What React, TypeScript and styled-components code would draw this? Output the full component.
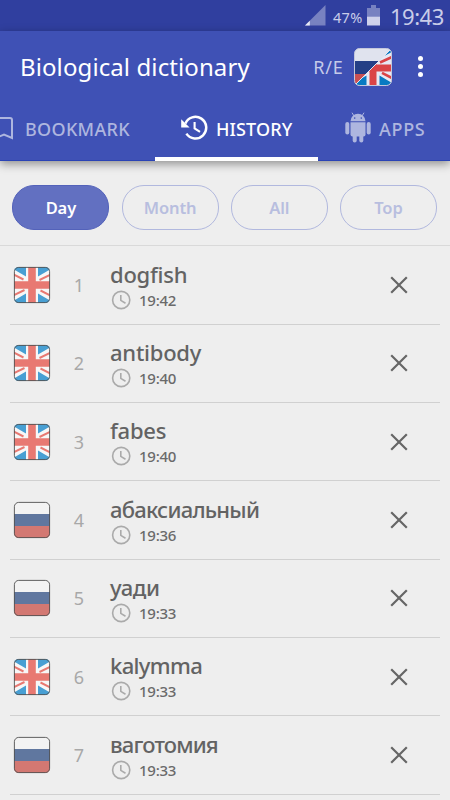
import React from "react";
import styled, { createGlobalStyle } from "styled-components";

const GlobalStyle = createGlobalStyle`
  * { box-sizing: border-box; }
  body { margin: 0; background: #eeeeee; font-family: "Noto Sans", sans-serif; overflow: hidden; }
  button { border: 0; padding: 0; margin: 0; background: none; font: inherit; color: inherit; }
  svg { display: block; flex: none; }
`;

const Screen = styled.main`
  width: 450px;
  height: 800px;
  overflow: hidden;
  display: flex;
  flex-direction: column;
  background: #eeeeee;
`;

const StatusBar = styled.div`
  height: 31px;
  flex: none;
  display: flex;
  align-items: center;
  justify-content: flex-end;
  padding-right: 6px;
  background: #303f9f;
  color: #c9cde9;
`;

const Battery = styled.span`
  font-size: 14.5px;
  line-height: 20px;
  width: 30px;
  margin: 2px 4px 0 7px;
  letter-spacing: 0.3px;
  white-space: nowrap;
`;

const Clock = styled.span`
  font-size: 22px;
  line-height: 30px;
  width: 54px;
  margin: 0 0 0 10px;
  letter-spacing: -0.5px;
  white-space: nowrap;
`;

const Header = styled.header`
  flex: none;
  height: 130px;
  background: #3f51b5;
  border-bottom: 1px solid #2a43b5;
  box-shadow: 0 3px 9px rgba(0, 0, 0, 0.4);
`;

const Toolbar = styled.div`
  height: 72px;
  display: flex;
  align-items: center;
  padding: 0 26.5px 1px 20px;
  color: #ffffff;
`;

const Title = styled.h1`
  margin: 1px 0 0;
  flex: 1;
  font-size: 24px;
  font-weight: 400;
  line-height: 32px;
  letter-spacing: 0.1px;
  white-space: nowrap;
`;

const Direction = styled.span`
  font-size: 18px;
  line-height: 24px;
  color: #c5cae9;
  margin-right: 10.5px;
  letter-spacing: 0.8px;
`;

const MenuButton = styled.button`
  margin-left: 25.5px;
  width: 6px;
  height: 21px;
  display: flex;
  flex-direction: column;
  justify-content: space-between;
`;

const Dot = styled.i`
  width: 5.4px;
  height: 5.4px;
  border-radius: 50%;
  background: #ffffff;
`;

const Tabs = styled.nav`
  height: 58px;
  display: grid;
  grid-template-columns: 155px 163px 132px;
`;

const Tab = styled.button<{ $active?: boolean; $start: number; $gap: number; $spacing: number }>`
  display: flex;
  align-items: center;
  gap: ${(p) => p.$gap}px;
  padding-left: ${(p) => p.$start}px;
  padding-bottom: ${(p) => (p.$active ? 2 : 6)}px;
  font-size: 18px;
  font-weight: 500;
  letter-spacing: ${(p) => p.$spacing}px;
  white-space: nowrap;
  color: ${(p) => (p.$active ? "#ffffff" : "#aeb6df")};
  border-bottom: ${(p) => (p.$active ? "4px solid #ffffff" : "0")};

  svg { margin-top: -3px; }
`;

const BookmarkSlot = styled.span`
  width: 13px;
  display: flex;
  justify-content: flex-end;
`;

const Filters = styled.div`
  flex: none;
  height: 85px;
  display: grid;
  grid-template-columns: repeat(4, 97px);
  column-gap: 12.2px;
  padding: 24px 12.4px 0;
  border-bottom: 1px solid #d9d9d9;
`;

const Pill = styled.button<{ $active?: boolean }>`
  height: 45px;
  border-radius: 22px;
  font-size: 16.5px;
  font-weight: 600;
  line-height: 24px;
  letter-spacing: -0.1px;
  border: 1px solid ${(p) => (p.$active ? "#5362ba" : "#b1b8de")};
  background: ${(p) => (p.$active ? "#6270c1" : "transparent")};
  color: ${(p) => (p.$active ? "#ffffff" : "#b8bedf")};
`;

const List = styled.ul`
  list-style: none;
  margin: 0;
  padding: 0.5px 10px 0;
`;

const Row = styled.li`
  height: 78.33px;
  display: grid;
  grid-template-columns: 50px 38px 12px 1fr 50.5px;
  align-items: center;
  border-bottom: 1px solid #d0d0d0;
`;

const FlagCell = styled.div`
  padding-left: 3px;
`;

const Index = styled.span`
  text-align: center;
  font-size: 18px;
  line-height: 24px;
  color: #a8a8a8;
`;

const Entry = styled.div`
  grid-column: 4;
  color: #636363;
`;

const Word = styled.div<{ $spacing: number }>`
  font-size: 22px;
  font-weight: 500;
  line-height: 28px;
  letter-spacing: ${(p) => p.$spacing}px;
  white-space: nowrap;
`;

const Time = styled.div`
  display: flex;
  align-items: center;
  gap: 8px;
  height: 23px;
  padding: 1px 0 0 1px;
  font-size: 15px;
  font-weight: 500;
  letter-spacing: -0.25px;
  color: #6a6a6a;
`;

const SignalIcon = () => (
  <svg width="21" height="21" viewBox="0 0 21 21">
    <path d="M20.5 0V20.5H0Z" fill="#7882c1" />
    <path d="M4.8 15.7V20.5H0Z" fill="#e8eaf6" />
  </svg>
);

const BatteryIcon = () => (
  <svg width="13" height="21" viewBox="0 0 13 21">
    <path d="M4 0h5v3h4v8.5H0V3h4z" fill="#7882c1" />
    <path d="M0 11.5h13v9H0z" fill="#cfd2eb" />
  </svg>
);

const UnionFlag = () => (
  <svg width="38" height="38" viewBox="0 0 38 38">
    <clipPath id="flag-round"><rect x="1" y="1" width="36" height="36" rx="4.5" /></clipPath>
    <g clipPath="url(#flag-round)">
      <path d="M1 1h36v36H1z" fill="#f7f7f7" />
      <path d="M1 1H13V10.5L1 3.5zM37 1H25V10.5L37 3.5zM1 37H13V27.5L1 34.5zM37 37H25V27.5L37 34.5z" fill="#489fd3" />
      <path d="M1 8.6L10.5 13.5M37 9L26.5 14M1 29L11.5 24M37 29.4L27.5 24.5" stroke="#e87972" strokeWidth="2" />
      <path d="M19 1V37M1 19H37" stroke="#e87972" strokeWidth="7.6" />
    </g>
    <rect x="1.4" y="1.4" width="35.2" height="35.2" rx="4.3" fill="none" stroke="#505050" strokeWidth=".9" />
  </svg>
);

const RussianFlag = () => (
  <svg width="38" height="38" viewBox="0 0 38 38">
    <rect x="1" y="1" width="36" height="36" rx="4.5" fill="#f3f3f3" />
    <path d="M1 13h36v12H1z" fill="#60779f" />
    <path d="M1 25h36v7.5a4.5 4.5 0 0 1-4.5 4.5h-27A4.5 4.5 0 0 1 1 32.5z" fill="#d37872" />
    <rect x="1.4" y="1.4" width="35.2" height="35.2" rx="4.3" fill="none" stroke="#505050" strokeWidth=".9" />
  </svg>
);

const SplitFlag = () => (
  <svg width="38" height="38" viewBox="0 0 38 38">
    <clipPath id="split-round"><rect x=".5" y=".5" width="37" height="37" rx="5" /></clipPath>
    <clipPath id="split-half"><path d="M38 0V38H0Z" /></clipPath>
    <g clipPath="url(#split-round)">
      <path d="M0 0h38v13H0z" fill="#e0e3ee" />
      <path d="M0 13h38v13H0z" fill="#243f86" />
      <path d="M0 26h38v12H0z" fill="#c95053" />
      <g clipPath="url(#split-half)">
        <path d="M0 0h38v38H0z" fill="#e6e9f4" />
        <path d="M38 1L25 4V10.5L38 4zM0 38H12.5V27.5L0 35zM38 38H25.5V27.5L38 35z" fill="#087ac2" />
        <path d="M38 9L26 14.5M38 30L28 24.8" stroke="#da4447" strokeWidth="2.6" />
        <path d="M19 14V38M15 20H38" stroke="#da4447" strokeWidth="7" />
      </g>
      <path d="M38 0L0 38" stroke="#e2e4ef" strokeWidth="1" />
    </g>
    <rect x=".5" y=".5" width="37" height="37" rx="5" fill="none" stroke="#c4c8dc" />
  </svg>
);

const BookmarkIcon = () => (
  <svg width="18" height="24" viewBox="0 0 18 24" fill="none" stroke="currentColor" strokeWidth="2">
    <path d="M1 22V2h14a2 2 0 0 1 2 2v18l-8-3.5z" />
  </svg>
);

const HistoryIcon = () => (
  <svg width="28" height="26" viewBox="0 0 28 26" fill="none">
    <path d="M4.4 8.6A10.8 10.8 0 1 1 5.4 18.6" stroke="currentColor" strokeWidth="2.5" />
    <path d="M.2 4.3V12.5H8.6z" fill="currentColor" />
    <path d="M13.6 7v6.4l5.4 3.5" stroke="currentColor" strokeWidth="2.1" />
  </svg>
);

const AndroidIcon = () => (
  <svg width="26" height="31" viewBox="0 0 26 31" fill="currentColor">
    <path d="M5.5 9.2A7.5 7.4 0 0 1 20.5 9.2z" />
    <path d="M9 4L7 .7M17 4l2-3.3" stroke="currentColor" strokeWidth="1" />
    <path d="M5.5 10.3h15v12.2a2 2 0 0 1-2 2h-11a2 2 0 0 1-2-2z" />
    <rect x=".3" y="10" width="4" height="12.5" rx="2" />
    <rect x="21.7" y="10" width="4" height="12.5" rx="2" />
    <rect x="7.7" y="21" width="4" height="9.5" rx="2" />
    <rect x="14.3" y="21" width="4" height="9.5" rx="2" />
    <circle cx="9.7" cy="6.1" r=".8" fill="#3f51b5" />
    <circle cx="16.3" cy="6.1" r=".8" fill="#3f51b5" />
  </svg>
);

const ClockIcon = () => (
  <svg width="20" height="20" viewBox="0 0 20 20" fill="none" stroke="#aaaaaa" strokeWidth="1.6">
    <circle cx="10.2" cy="10" r="8.6" />
    <path d="M9.8 5v5.4l4.7 2.8" />
  </svg>
);

const CloseIcon = () => (
  <svg width="18" height="18" viewBox="0 0 18 18" stroke="#666666" strokeWidth="2.2">
    <path d="M1.2 1.2l15.6 15.6M16.8 1.2L1.2 16.8" />
  </svg>
);

const entries = [
  { word: "dogfish", time: "19:42", lang: "en", spacing: -0.25 },
  { word: "antibody", time: "19:40", lang: "en", spacing: -0.25 },
  { word: "fabes", time: "19:40", lang: "en", spacing: -0.25 },
  { word: "абаксиальный", time: "19:36", lang: "ru", spacing: -0.75 },
  { word: "уади", time: "19:33", lang: "ru", spacing: -0.5 },
  { word: "kalymma", time: "19:33", lang: "en", spacing: -0.65 },
  { word: "ваготомия", time: "19:33", lang: "ru", spacing: -0.85 },
];

export default function App() {
  return (
    <Screen>
      <GlobalStyle />
      <StatusBar>
        <SignalIcon />
        <Battery>47%</Battery>
        <BatteryIcon />
        <Clock>19:43</Clock>
      </StatusBar>
      <Header>
        <Toolbar>
          <Title>Biological dictionary</Title>
          <Direction>R/E</Direction>
          <SplitFlag />
          <MenuButton aria-label="Menu"><Dot /><Dot /><Dot /></MenuButton>
        </Toolbar>
        <Tabs>
          <Tab $start={0} $gap={12} $spacing={0.3}><BookmarkSlot><BookmarkIcon /></BookmarkSlot>BOOKMARK</Tab>
          <Tab $active $start={26} $gap={7} $spacing={0.12}><HistoryIcon />HISTORY</Tab>
          <Tab $start={27} $gap={8} $spacing={0.7}><AndroidIcon />APPS</Tab>
        </Tabs>
      </Header>
      <Filters>
        <Pill $active>Day</Pill>
        <Pill>Month</Pill>
        <Pill>All</Pill>
        <Pill>Top</Pill>
      </Filters>
      <List>
        {entries.map((e, i) => (
          <Row key={e.word}>
            <FlagCell>{e.lang === "en" ? <UnionFlag /> : <RussianFlag />}</FlagCell>
            <Index>{i + 1}</Index>
            <Entry>
              <Word $spacing={e.spacing}>{e.word}</Word>
              <Time><ClockIcon />{e.time}</Time>
            </Entry>
            <button aria-label="Remove"><CloseIcon /></button>
          </Row>
        ))}
      </List>
    </Screen>
  );
}
